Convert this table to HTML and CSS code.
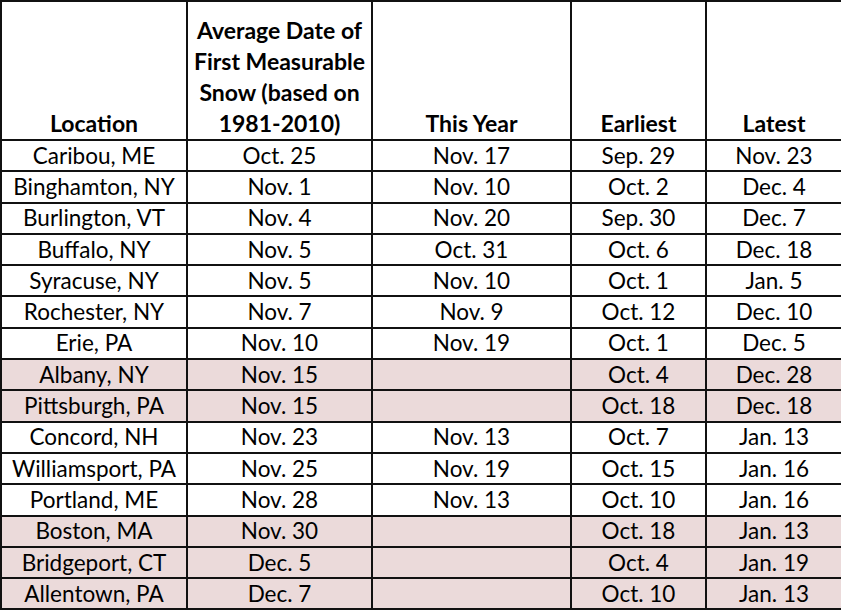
FILE: index.html
```html
<!DOCTYPE html>
<html>
<head>
<meta charset="utf-8">
<link rel="stylesheet" href="styles.css">
</head>
<body>
<table class="snow">
  <colgroup>
    <col class="c-loc"><col class="c-avg"><col class="c-year"><col class="c-early"><col class="c-late">
  </colgroup>
  <thead>
    <tr>
      <th>Location</th>
      <th>Average Date of First Measurable Snow (based on 1981-2010)</th>
      <th>This Year</th>
      <th>Earliest</th>
      <th>Latest</th>
    </tr>
  </thead>
  <tbody>
    <tr><td>Caribou, ME</td><td>Oct. 25</td><td>Nov. 17</td><td>Sep. 29</td><td>Nov. 23</td></tr>
    <tr><td>Binghamton, NY</td><td>Nov. 1</td><td>Nov. 10</td><td>Oct. 2</td><td>Dec. 4</td></tr>
    <tr><td>Burlington, VT</td><td>Nov. 4</td><td>Nov. 20</td><td>Sep. 30</td><td>Dec. 7</td></tr>
    <tr><td>Buffalo, NY</td><td>Nov. 5</td><td>Oct. 31</td><td>Oct. 6</td><td>Dec. 18</td></tr>
    <tr><td>Syracuse, NY</td><td>Nov. 5</td><td>Nov. 10</td><td>Oct. 1</td><td>Jan. 5</td></tr>
    <tr><td>Rochester, NY</td><td>Nov. 7</td><td>Nov. 9</td><td>Oct. 12</td><td>Dec. 10</td></tr>
    <tr><td>Erie, PA</td><td>Nov. 10</td><td>Nov. 19</td><td>Oct. 1</td><td>Dec. 5</td></tr>
    <tr class="pending"><td>Albany, NY</td><td>Nov. 15</td><td></td><td>Oct. 4</td><td>Dec. 28</td></tr>
    <tr class="pending"><td>Pittsburgh, PA</td><td>Nov. 15</td><td></td><td>Oct. 18</td><td>Dec. 18</td></tr>
    <tr><td>Concord, NH</td><td>Nov. 23</td><td>Nov. 13</td><td>Oct. 7</td><td>Jan. 13</td></tr>
    <tr><td>Williamsport, PA</td><td>Nov. 25</td><td>Nov. 19</td><td>Oct. 15</td><td>Jan. 16</td></tr>
    <tr><td>Portland, ME</td><td>Nov. 28</td><td>Nov. 13</td><td>Oct. 10</td><td>Jan. 16</td></tr>
    <tr class="pending"><td>Boston, MA</td><td>Nov. 30</td><td></td><td>Oct. 18</td><td>Jan. 13</td></tr>
    <tr class="pending"><td>Bridgeport, CT</td><td>Dec. 5</td><td></td><td>Oct. 4</td><td>Jan. 19</td></tr>
    <tr class="pending"><td>Allentown, PA</td><td>Dec. 7</td><td></td><td>Oct. 10</td><td>Jan. 13</td></tr>
  </tbody>
</table>
</body>
</html>
```
FILE: styles.css
```css
html, body {
  margin: 0;
  padding: 0;
  background: #ffffff;
}

.snow {
  border-collapse: collapse;
  table-layout: fixed;
  width: 841px;
  font-family: Lato, "Liberation Sans", sans-serif;
  font-size: 22.5px;
  color: #000;
}

.c-loc { width: 186px; }
.c-avg { width: 185px; }
.c-year { width: 199px; }
.c-early { width: 135px; }
.c-late { width: 136px; }

.snow th,
.snow td {
  border: 2px solid #111111;
  padding: 0 1px;
  text-align: center;
}

.snow th {
  height: 137px;
  vertical-align: bottom;
  font-size: 23px;
  font-weight: 700;
  line-height: 31px;
  padding-bottom: 0;
}

.snow td {
  height: 29.3px;
  line-height: 24px;
  vertical-align: middle;
  white-space: nowrap;
}

.snow tr.pending td {
  background: #ebdada;
}
```
